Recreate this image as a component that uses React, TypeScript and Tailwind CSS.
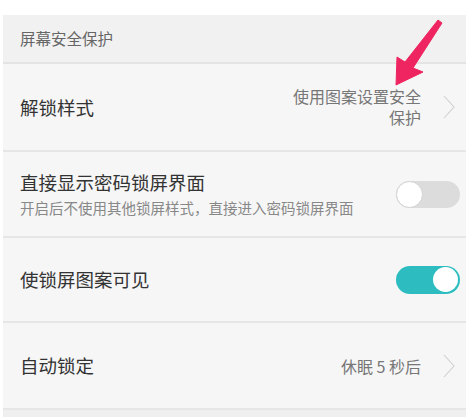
import React from 'react';

const Chevron = () => (
  <svg width="12" height="24" viewBox="0 0 12 24" className="shrink-0">
    <path d="M1 1 L11 12 L1 23" fill="none" stroke="#cfcfcf" strokeWidth="1.1" />
  </svg>
);

const Toggle = ({ on }: { on: boolean }) =>
  on ? (
    <div className="w-[64px] h-[28px] rounded-full bg-[#2dbdc0] flex items-center justify-end pr-[2px]">
      <div className="w-[25px] h-[25px] rounded-full bg-white" />
    </div>
  ) : (
    <div className="w-[64px] h-[27px] rounded-full bg-[#dcdcdc] flex items-center">
      <div className="w-[27px] h-[27px] rounded-full bg-white border border-[#d2d2d2]" />
    </div>
  );

export default function App() {
  return (
    <div className="relative w-[469px] h-[417px] overflow-hidden bg-white font-['Noto_Sans_CJK_SC','Noto_Sans',sans-serif]">
      <div className="pt-[15px] px-[3px]">
        <div className="h-[49px] bg-[#f1f1f1] border-b-2 border-[#e4e4e4] flex items-center pl-[17px] text-[15.5px] text-[#666] leading-none">
          屏幕安全保护
        </div>

        <div className="h-[88px] bg-[#f6f6f6] border-b-2 border-[#e6e6e6] flex items-center justify-between pl-[17px] pr-[11px]">
          <span className="text-[18.5px] text-[#333] leading-none">解锁样式</span>
          <div className="flex items-center gap-[22px]">
            <span className="text-[16px] text-[#777] text-right leading-[21px]">
              使用图案设置安全
              <br />
              保护
            </span>
            <Chevron />
          </div>
        </div>

        <div className="h-[86px] bg-[#f6f6f6] border-b-2 border-[#e6e6e6] flex items-center justify-between pl-[17px] pr-[6px]">
          <div className="flex flex-col gap-[9px]">
            <span className="text-[18.5px] text-[#333] leading-none">直接显示密码锁屏界面</span>
            <span className="text-[14.5px] text-[#888] leading-none">开启后不使用其他锁屏样式，直接进入密码锁屏界面</span>
          </div>
          <Toggle on={false} />
        </div>

        <div className="h-[85px] bg-[#f6f6f6] border-b-2 border-[#e6e6e6] flex items-center justify-between pl-[17px] pr-[6px]">
          <span className="text-[18.5px] text-[#333] leading-none">使锁屏图案可见</span>
          <Toggle on={true} />
        </div>

        <div className="h-[87px] bg-[#f6f6f6] border-b-2 border-[#e6e6e6] flex items-center justify-between pl-[17px] pr-[11px]">
          <span className="text-[18.5px] text-[#333] leading-none">自动锁定</span>
          <div className="flex items-center gap-[22px]">
            <span className="text-[16px] text-[#777] leading-none">休眠 5 秒后</span>
            <Chevron />
          </div>
        </div>

        <div className="h-[10px] bg-[#efefef]" />
      </div>

      <svg className="absolute left-0 top-0" width="469" height="417" viewBox="0 0 469 417">
        <polygon
          points="396,85 397,57 405,62 438,20 442,23 413,68 423,72"
          fill="#ee2560"
          stroke="#ee2560"
          strokeWidth="1"
          strokeLinejoin="round"
        />
      </svg>
    </div>
  );
}
